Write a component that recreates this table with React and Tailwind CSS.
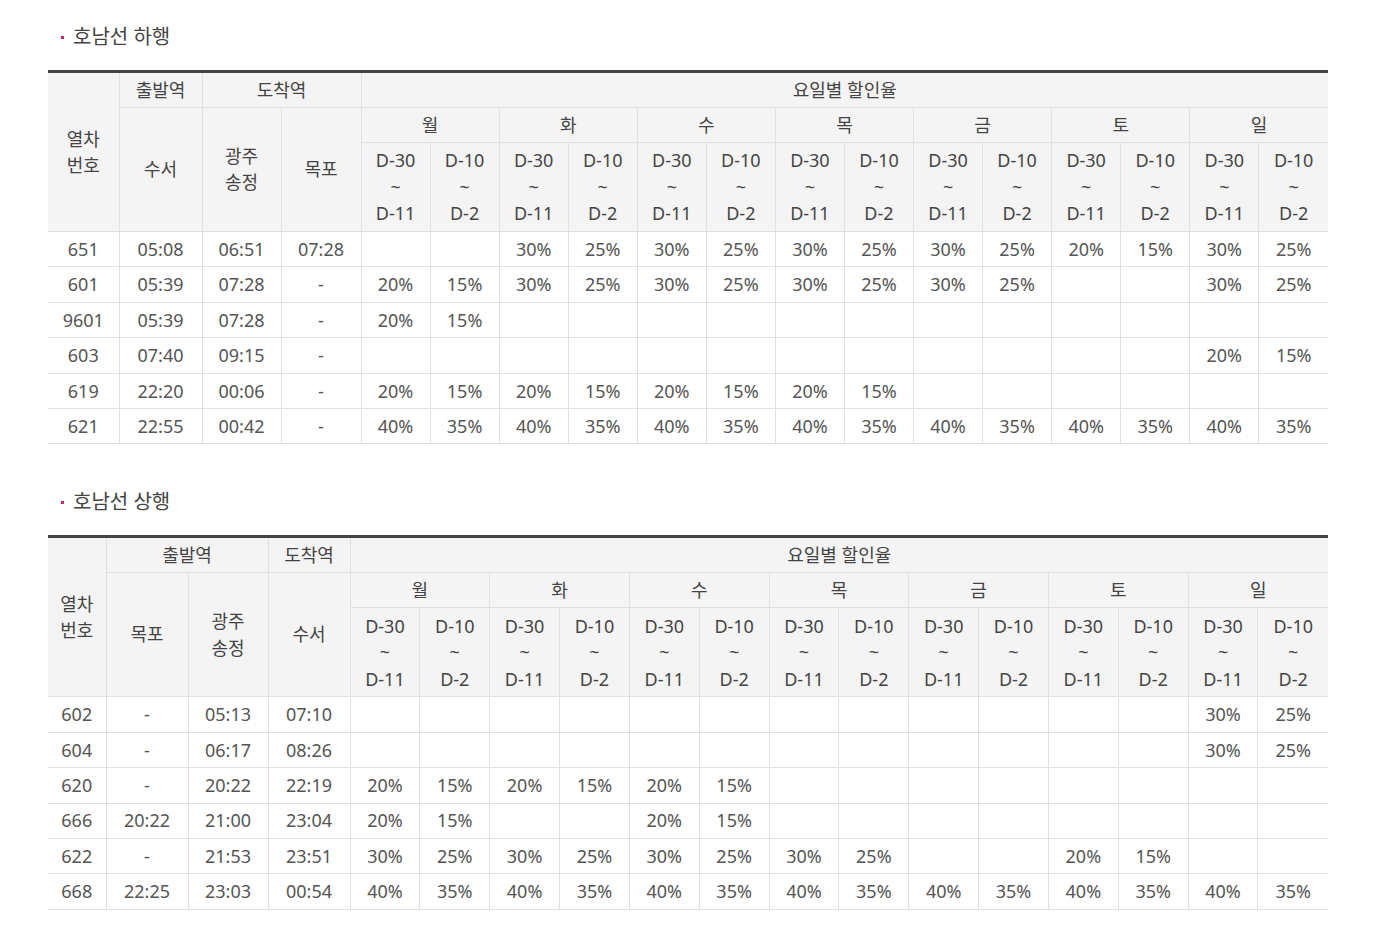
const DAYS = ["월", "화", "수", "목", "금", "토", "일"];

const down = {
  title: "호남선 하행",
  cols: ["w-[71px]", "w-[83px]", "w-[79px]", "w-[80px]"],
  dep: ["수서"],
  arr: ["광주\n송정", "목포"],
  rows: [
    ["651", "05:08", "06:51", "07:28", "", "", 30, 25, 30, 25, 30, 25, 30, 25, 20, 15, 30, 25],
    ["601", "05:39", "07:28", "-", 20, 15, 30, 25, 30, 25, 30, 25, 30, 25, "", "", 30, 25],
    ["9601", "05:39", "07:28", "-", 20, 15, "", "", "", "", "", "", "", "", "", "", "", ""],
    ["603", "07:40", "09:15", "-", "", "", "", "", "", "", "", "", "", "", "", "", 20, 15],
    ["619", "22:20", "00:06", "-", 20, 15, 20, 15, 20, 15, 20, 15, "", "", "", "", "", ""],
    ["621", "22:55", "00:42", "-", 40, 35, 40, 35, 40, 35, 40, 35, 40, 35, 40, 35, 40, 35],
  ],
};

const up = {
  title: "호남선 상행",
  cols: ["w-[58px]", "w-[82px]", "w-[80px]", "w-[82px]"],
  dep: ["목포", "광주\n송정"],
  arr: ["수서"],
  rows: [
    ["602", "-", "05:13", "07:10", "", "", "", "", "", "", "", "", "", "", "", "", 30, 25],
    ["604", "-", "06:17", "08:26", "", "", "", "", "", "", "", "", "", "", "", "", 30, 25],
    ["620", "-", "20:22", "22:19", 20, 15, 20, 15, 20, 15, "", "", "", "", "", "", "", ""],
    ["666", "20:22", "21:00", "23:04", 20, 15, "", "", 20, 15, "", "", "", "", "", "", "", ""],
    ["622", "-", "21:53", "23:51", 30, 25, 30, 25, 30, 25, 30, 25, "", "", 20, 15, "", ""],
    ["668", "22:25", "23:03", "00:54", 40, 35, 40, 35, 40, 35, 40, 35, 40, 35, 40, 35, 40, 35],
  ],
};

const th = "border-b border-r border-[#e0e0e0] bg-[#f4f4f4] font-normal text-[#444] align-middle";
const td = "border-b border-r border-[#e0e0e0] text-[#555] align-middle";

function Section({ data, first }) {
  return (
    <div className={first ? "pt-[23px]" : "pt-[44px]"}>
      <div className="flex items-center h-[28px] mb-[19px] pl-[13px]">
        <span className="w-[3px] h-[3px] bg-[#c8247f] mr-[9px]" />
        <span className="text-[20px] text-[#444]">{data.title}</span>
      </div>
      <table className="w-[1280px] table-fixed border-collapse border-t-[3px] border-t-[#444] text-center text-[18px] leading-[26.5px]">
        <colgroup>
          {data.cols.map((c, i) => (
            <col key={i} className={c} />
          ))}
          {Array.from({ length: 14 }).map((_, i) => (
            <col key={"d" + i} />
          ))}
        </colgroup>
        <thead>
          <tr className="h-[35.5px] [&>*:last-child]:border-r-0">
            <th rowSpan={3} className={th}>
              열차
              <br />
              번호
            </th>
            <th colSpan={data.dep.length} className={th}>출발역</th>
            <th colSpan={data.arr.length} className={th}>도착역</th>
            <th colSpan={14} className={th}>요일별 할인율</th>
          </tr>
          <tr className="h-[35.5px] [&>*:last-child]:border-r-0">
            {[...data.dep, ...data.arr].map((s) => (
              <th key={s} rowSpan={2} className={th + " whitespace-pre-line"}>
                {s}
              </th>
            ))}
            {DAYS.map((d) => (
              <th key={d} colSpan={2} className={th}>
                {d}
              </th>
            ))}
          </tr>
          <tr className="h-[89px] [&>*:last-child]:border-r-0">
            {DAYS.map((d) => [
              <th key={d + "a"} className={th}>
                D-30
                <br />~<br />
                D-11
              </th>,
              <th key={d + "b"} className={th}>
                D-10
                <br />~<br />
                D-2
              </th>,
            ])}
          </tr>
        </thead>
        <tbody>
          {data.rows.map((r) => (
            <tr key={r[0]} className="h-[35.4px] [&>*:last-child]:border-r-0">
              {r.map((v, i) => (
                <td key={i} className={td}>
                  {v === "" ? "" : i >= 4 ? v + "%" : v}
                </td>
              ))}
            </tr>
          ))}
        </tbody>
      </table>
    </div>
  );
}

export default function App() {
  return (
    <div
      className="min-h-screen bg-white pl-[48px]"
      style={{ fontFamily: '"Noto Sans", "Noto Sans CJK KR", sans-serif' }}
    >
      <Section data={down} first />
      <Section data={up} />
    </div>
  );
}
